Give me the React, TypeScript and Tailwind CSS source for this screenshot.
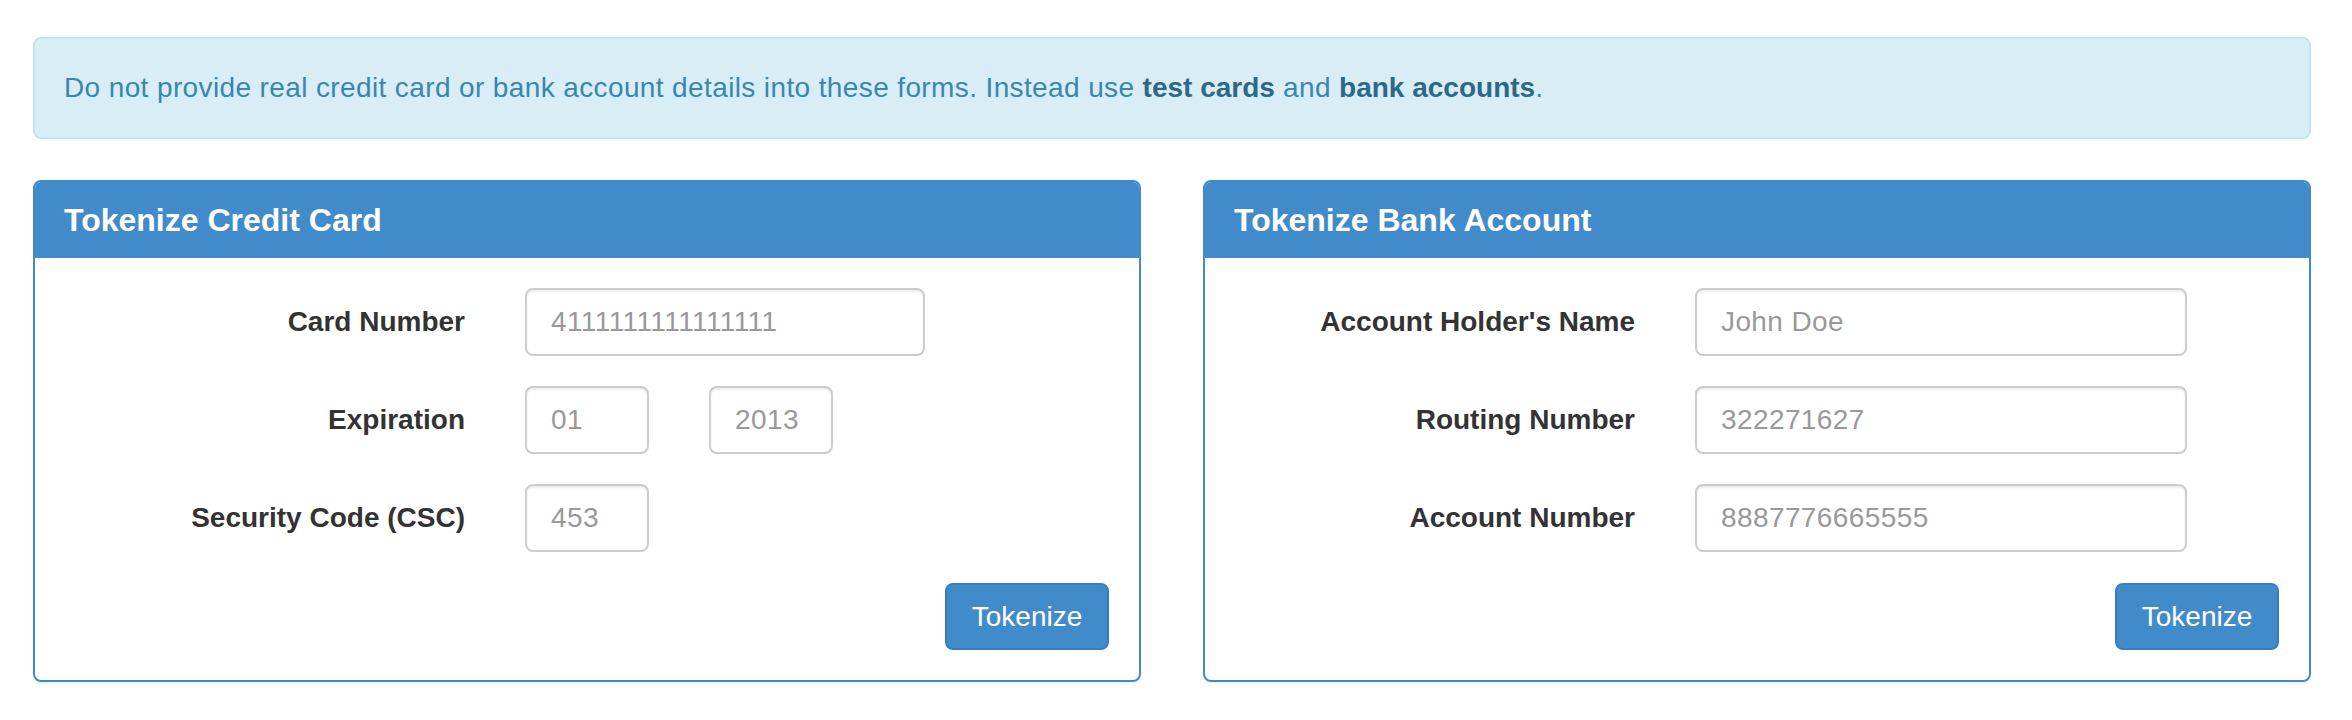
import React from 'react';

const labelCls =
  "w-[400px] shrink-0 text-right text-[28px] font-bold text-[#333333] leading-[40px]";
const inputCls =
  "h-[68px] rounded-[8px] border-2 border-[#cccccc] bg-white px-[24px] text-[28px] tracking-[0.4px] text-[#999999] shadow-[inset_0_2px_2px_rgba(0,0,0,0.075)] outline-none placeholder:text-[#999999]";

const Field = ({ label, children }: { label: string; children: React.ReactNode }) => (
  <div className="flex items-center">
    <label className={labelCls}>{label}</label>
    <div className="ml-[60px] flex items-center">{children}</div>
  </div>
);

const Panel = ({ title, children }: { title: string; children: React.ReactNode }) => (
  <div className="rounded-[8px] border-2 border-[#428bca] bg-white shadow-[0_2px_2px_rgba(0,0,0,0.05)]">
    <div className="h-[76px] bg-[#428bca] px-[29px] flex items-center rounded-t-[6px]">
      <h3 className="text-[32px] font-bold text-white leading-none">{title}</h3>
    </div>
    <div className="p-[30px]">
      <div className="flex flex-col gap-[30px]">{children}</div>
      <div className="mt-[31px] flex justify-end">
        <button className="h-[67px] w-[164px] rounded-[8px] border-2 border-[#357ebd] bg-[#428bca] text-[28px] text-white">
          Tokenize
        </button>
      </div>
    </div>
  </div>
);

export default function App() {
  return (
    <div
      className="min-h-[720px] bg-white pl-[33px] pt-[37px]"
      style={{ fontFamily: '"Liberation Sans", Arial, sans-serif' }}
    >
      <div className="w-[2278px]">
        <div className="h-[102px] rounded-[8px] border-2 border-[#bce8f1] bg-[#d9edf7] px-[29px] flex items-center text-[28px] tracking-[0.38px] text-[#3a87ad]">
          <p>
            Do not provide real credit card or bank account details into these forms. Instead use{' '}
            <b className="tracking-normal text-[#2d6987]">test cards</b> and{' '}
            <b className="tracking-normal text-[#2d6987]">bank accounts</b>.
          </p>
        </div>

        <div className="mt-[41px] grid grid-cols-2 gap-[62px]">
          <Panel title="Tokenize Credit Card">
            <Field label="Card Number">
              <input className={`${inputCls} w-[400px]`} placeholder="4111111111111111" />
            </Field>
            <Field label="Expiration">
              <input className={`${inputCls} w-[124px]`} placeholder="01" />
              <input className={`${inputCls} ml-[60px] w-[124px]`} placeholder="2013" />
            </Field>
            <Field label="Security Code (CSC)">
              <input className={`${inputCls} w-[124px]`} placeholder="453" />
            </Field>
          </Panel>

          <Panel title="Tokenize Bank Account">
            <Field label="Account Holder's Name">
              <input className={`${inputCls} w-[492px]`} placeholder="John Doe" />
            </Field>
            <Field label="Routing Number">
              <input className={`${inputCls} w-[492px]`} placeholder="322271627" />
            </Field>
            <Field label="Account Number">
              <input className={`${inputCls} w-[492px]`} placeholder="8887776665555" />
            </Field>
          </Panel>
        </div>
      </div>
    </div>
  );
}
